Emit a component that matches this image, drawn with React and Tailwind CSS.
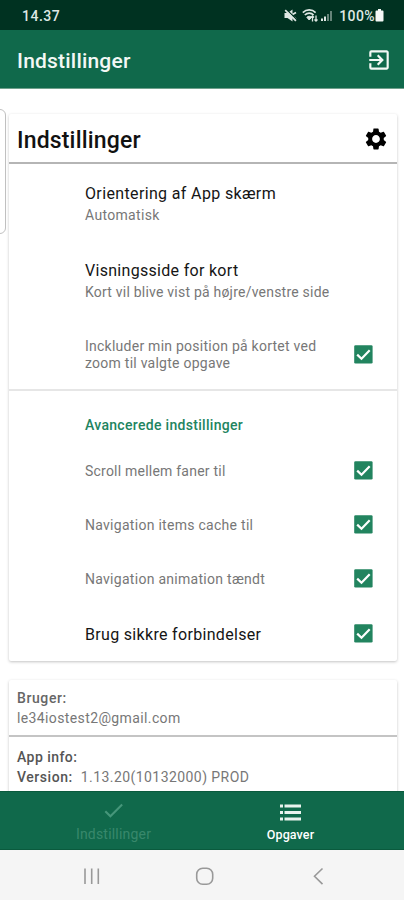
import React from "react";
import { MdExitToApp, MdSettings, MdCheck } from "react-icons/md";

function StatusBar() {
  return (
    <div className="flex h-[30px] items-center bg-[#003221] pl-[22px] pr-[20px] text-[#dfe8e4]">
      <span className="pt-px text-[14px] font-medium leading-[18px] tracking-[0.5px]">14.37</span>
      <div className="ml-auto flex items-center pt-px">
        <svg width="13" height="13" viewBox="0 0 13 13" className="mr-[5px]">
          <path d="M.500 4h3L8.500 .500v12L3.500 9h-3z" fill="currentColor" />
          <path d="M8.500 5.500l3.500-2M8.500 7.500l3.500 2.500" stroke="currentColor" strokeWidth="1.800" />
          <path d="M2.500 .500l10 10" stroke="#003221" strokeWidth="1.200" />
          <path d="M1.200 1.100L11.900 11.800" stroke="currentColor" strokeWidth="1.700" />
        </svg>
        <svg width="31" height="15" viewBox="0 0 31 15" className="mr-[6px]" fill="none" stroke="currentColor">
          <path d="M.8 4.6c3.6-3.6 9.2-3.6 12.8 0" strokeWidth="1.6" />
          <path d="M2.8 7c2.500-2.500 6.400-2.500 8.800 0" strokeWidth="1.6" />
          <path d="M4.8 9.3c1.400-1.400 3.600-1.400 4.800 0L7.200 12z" fill="currentColor" strokeWidth="1" />
          <path d="M10.500 13.500V8M9 9.500l1.500-1.600 1.500 1.600M14 7.500v5.500M12.500 11.500l1.500 1.600 1.500-1.600" strokeWidth="1.300" />
          <path d="M20 13v-2.500M23 13V8.500" strokeWidth="2" />
          <path d="M26 13V6M29 13V3" strokeWidth="2" opacity=".45" />
        </svg>
        <span className="text-[14px] font-medium leading-[18px] tracking-[0.4px]">100%</span>
        <svg width="9" height="13" viewBox="0 0 9 13">
          <path d="M3 0h3v1.500h1.500q1 0 1 1v9q0 1-1 1h-6q-1 0-1-1v-9q0-1 1-1H3z" fill="#f4f8f6" />
        </svg>
      </div>
    </div>
  );
}

function Check() {
  return (
    <svg width="19" height="19" viewBox="0 0 19 19" className="mr-[24.500px] shrink-0">
      <rect x=".2" y=".2" width="18.400" height="18.400" rx="1.300" fill="#22845f" />
      <path d="M3.200 9.600l4.300 4.200 8.200-8.600" fill="none" stroke="#fff" strokeWidth="2.200" />
    </svg>
  );
}

function CheckRow({ label, className, labelClass }) {
  return (
    <div className={"flex items-center justify-between pl-[76px] " + className}>
      <span className={labelClass}>{label}</span>
      <Check />
    </div>
  );
}

const small = "text-[14px] leading-[17px] text-[#777] whitespace-pre-line ";
const large = "text-[16px] leading-5 text-[#151515] ";

export default function App() {
  return (
    <div className="flex h-[900px] w-[404px] flex-col overflow-hidden bg-white font-['Roboto',sans-serif]">
      <StatusBar />
      <header className="flex h-[59px] items-center justify-between border-b border-[#6fa08c] bg-[#10694b] pl-[17px] pr-[12px]">
        <h1 className="pt-[4px] text-[21px] font-medium leading-6 tracking-[0.2px] text-[#f3f8f5]">Indstillinger</h1>
        <MdExitToApp size={26} className="mt-px text-[#f3f8f5]" />
      </header>

      <main className="relative flex min-h-0 flex-1 flex-col overflow-hidden px-[9px] pt-[25px]">
        <div className="absolute left-[-8px] top-[20px] h-[125px] w-[14px] rounded-[6px] border border-[#c0c0c0]" />

        <section className="h-[547px] w-[388px] shrink-0 rounded-[2px] shadow-[0_1px_3px_rgba(0,0,0,0.24)]">
          <div className="flex h-[50px] items-center justify-between border-b-2 border-[#b5b5b5] pl-2 pr-[8.500px]">
            <h2 className="pt-[5px] text-[23px] font-medium leading-7 tracking-[0.17px] text-[#111]">Indstillinger</h2>
            <MdSettings size={26} className="mt-px text-black" />
          </div>
          <div className="flex h-[67px] flex-col pl-[76px] pt-[20px]">
            <span className={large + "tracking-[0.36px]"}>Orientering af App skærm</span>
            <span className={small + "mt-[3px] tracking-[0.32px]"}>Automatisk</span>
          </div>
          <div className="flex h-[81px] flex-col pl-[76px] pt-[30px]">
            <span className={large + "tracking-[0.3px]"}>Visningsside for kort</span>
            <span className={small + "mt-[3px] tracking-[0.22px]"}>Kort vil blive vist på højre/venstre side</span>
          </div>
          <CheckRow className="h-[84px]" labelClass={small + "pt-[2px] tracking-[0.25px]"} label={"Inckluder min position på kortet ved\nzoom til valgte opgave"} />
          <div className="-mt-[7px] h-[2px] bg-[#e6e6e6]" />
          <div className="flex h-[52px] items-end pl-[76px] pb-[9px]">
            <span className="text-[14px] font-medium leading-[17px] tracking-[0.31px] text-[#22845f]">Avancerede indstillinger</span>
          </div>
          <CheckRow className="h-[54px]" labelClass={small + "pt-[3px] tracking-[0.22px]"} label="Scroll mellem faner til" />
          <CheckRow className="h-[54px]" labelClass={small + "pt-[3px] tracking-[0.28px]"} label="Navigation items cache til" />
          <CheckRow className="h-[54px]" labelClass={small + "pt-[3px] tracking-[0.28px]"} label="Navigation animation tændt" />
          <CheckRow className="h-[56px]" labelClass={large + "pt-[3px] tracking-[0.32px]"} label="Brug sikkre forbindelser" />
        </section>

        <section className="mt-[19px] h-[140px] w-[388px] shrink-0 rounded-[2px] text-[14px] leading-5 text-[#777] shadow-[0_1px_3px_rgba(0,0,0,0.24)]">
          <div className="flex h-[57px] flex-col border-b-2 border-[#c4c4c4] pl-2 pt-2">
            <span className="font-medium tracking-[0.6px] text-[#666]">Bruger:</span>
            <span className="tracking-[0.38px]">le34iostest2@gmail.com</span>
          </div>
          <div className="flex flex-col pl-2 pt-[10px]">
            <span className="font-medium tracking-[0.45px] text-[#555]">App info:</span>
            <div className="flex gap-[8px]">
              <span className="font-medium tracking-[0.55px] text-[#555]">Version:</span>
              <span className="tracking-[0.43px]">1.13.20(10132000) PROD</span>
            </div>
          </div>
        </section>
      </main>

      <nav className="flex h-[59px] shrink-0 border-y border-[#0a5a3d] bg-[#10694b] px-[25px]">
        <div className="flex flex-1 flex-col items-center pt-[6px] text-[#46967a]">
          <MdCheck size={25} />
          <span className="mt-[2px] text-[14px] leading-[18px] tracking-[0.2px] text-[#38886b]">Indstillinger</span>
        </div>
        <div className="flex flex-1 flex-col items-center pt-[12px] text-[#e9f3ee]">
          <svg width="21" height="17" viewBox="0 0 21 17" fill="currentColor">
            <path d="M0 .500h3v3H0zM4.500 .500H21v3H4.500zM0 7h3v3H0zM4.500 7H21v3H4.500zM0 13.500h3v3H0zM4.500 13.500H21v3H4.500z" />
          </svg>
          <span className="mt-[5px] text-[12.500px] font-medium leading-[17px] tracking-[0.1px] text-white">Opgaver</span>
        </div>
      </nav>

      <footer className="flex h-[50px] shrink-0 items-center bg-[#f5f5f5] text-[#999]">
        <svg width="404" height="50" viewBox="0 0 404 50" fill="none" stroke="currentColor">
          <path d="M85 18.500v15.500M91.700 18.500v15.500M98.300 18.500v15.500" strokeWidth="1.600" />
          <rect x="196.700" y="18.200" width="16" height="16" rx="6" strokeWidth="1.600" />
          <path d="M322.500 18.500l-8 7.800 8 7.800" strokeWidth="1.600" />
        </svg>
      </footer>
    </div>
  );
}
